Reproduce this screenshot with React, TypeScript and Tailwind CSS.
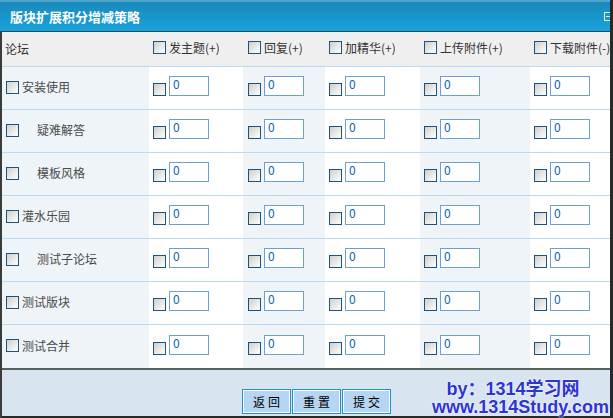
import React from 'react';

const cols = ['发主题(+)', '回复(+)', '加精华(+)', '上传附件(+)', '下载附件(-)'];

const forums = [
  { name: '安装使用', sub: false },
  { name: '疑难解答', sub: true },
  { name: '模板风格', sub: true },
  { name: '灌水乐园', sub: false },
  { name: '测试子论坛', sub: true },
  { name: '测试版块', sub: false },
  { name: '测试合并', sub: false },
];

const cellBg = ['bg-[#eef4f8]', 'bg-white', 'bg-[#eef4f8]', 'bg-white', 'bg-[#eef4f8]', 'bg-white'];
const cellPad = ['pl-[4px]', 'pl-[4px]', 'pl-[5px]', 'pl-[4px]', 'pl-[4px]', 'pl-[4px]'];

function Box() {
  return (
    <span className="inline-block w-[13px] h-[13px] shrink-0 border border-[#1c5180] bg-linear-to-br from-[#cfcfcb] to-white" />
  );
}

function ScoreInput() {
  return (
    <div className="flex items-end gap-[3px]">
      <Box />
      <div className="w-[40px] h-[20px] border border-[#6c9fd2] bg-white px-[3px] text-[12px] leading-[14px] text-[#0b64a8]">
        0
      </div>
    </div>
  );
}

export default function App() {
  return (
    <div
      className="w-[613px] h-[418px] overflow-hidden bg-[#262a28] pr-[3px] flex flex-col"
      style={{ fontFamily: '"Noto Sans CJK SC", "Liberation Sans", sans-serif' }}
    >
      {/* Title bar */}
      <div className="h-[31px] shrink-0 flex items-center justify-between border-t-2 border-[#4ea6cb] bg-linear-to-b from-[#1a89bb] to-[#16a3dc] pl-[10px] overflow-hidden">
        <span className="text-white text-[13px] font-bold">版块扩展积分增减策略</span>
        <span className="w-[9px] h-[9px] mr-[-3px] border border-[#e6eef2] flex items-center justify-center">
          <span className="block w-[5px] h-px bg-[#e6eef2]" />
        </span>
      </div>
      <div className="h-px shrink-0 bg-[#2c4b58]" />

      {/* Body */}
      <div className="flex-1 flex flex-col border-l-2 border-[#3a3c3a]">
        {/* Header */}
        <div className="h-[35px] shrink-0 grid grid-cols-[147px_94px_82px_95px_110px_80px] bg-[#efefef] border-b border-[#b9daf1] text-[12px] text-[#333]">
          <div className="flex items-center pl-[3px] pb-[1px]">论坛</div>
          {cols.map((c, i) => (
            <div key={c} className={`flex items-center gap-[3px] pb-[3px] whitespace-nowrap ${cellPad[i + 1]}`}>
              <Box />
              <span>{c}</span>
            </div>
          ))}
        </div>

        {/* Rows */}
        {forums.map((f, r) => (
          <div
            key={f.name}
            className={`h-[43px] shrink-0 grid grid-cols-[147px_94px_82px_95px_110px_80px] ${
              r < forums.length - 1 ? 'border-b border-[#b9daf1]' : 'h-[42px]'
            }`}
          >
            <div className={`flex items-center pb-[2px] pl-[4px] text-[12px] text-[#4a4a4a] ${cellBg[0]}`}>
              <Box />
              <span className={f.sub ? 'ml-[18px]' : 'ml-[3px]'}>{f.name}</span>
            </div>
            {cols.map((c, i) => (
              <div key={c} className={`flex items-center pb-[4px] ${cellBg[i + 1]} ${cellPad[i + 1]}`}>
                <ScoreInput />
              </div>
            ))}
          </div>
        ))}

        <div className="h-[2px] shrink-0 bg-[#56625a]" />

        {/* Footer */}
        <div className="h-[46px] shrink-0 bg-[#d8e4f0] flex items-end">
          <div className="flex gap-[1px] ml-[240px] mb-[2px]">
            {['返回', '重置', '提交'].map((b) => (
              <button
                key={b}
                className="w-[49px] h-[25px] border border-[#1b93c7] shadow-[inset_0_0_0_1px_#fff] bg-[#b5d5f3] text-[12px] text-black tracking-[3px] pl-[3px] leading-none"
              >
                {b}
              </button>
            ))}
          </div>
          <div
            className="ml-auto mr-[1px] whitespace-pre text-center font-bold text-[18px] leading-[18px] text-[#2d33d4] [text-shadow:0_0_2px_#fff,0_0_1px_#fff]"
            style={{ fontFamily: '"Liberation Sans", "Noto Sans CJK SC", sans-serif' }}
          >
            {'by：1314学习网\u00a0\u00a0\u00a0\nwww.1314Study.com'}
          </div>
        </div>
      </div>
    </div>
  );
}
